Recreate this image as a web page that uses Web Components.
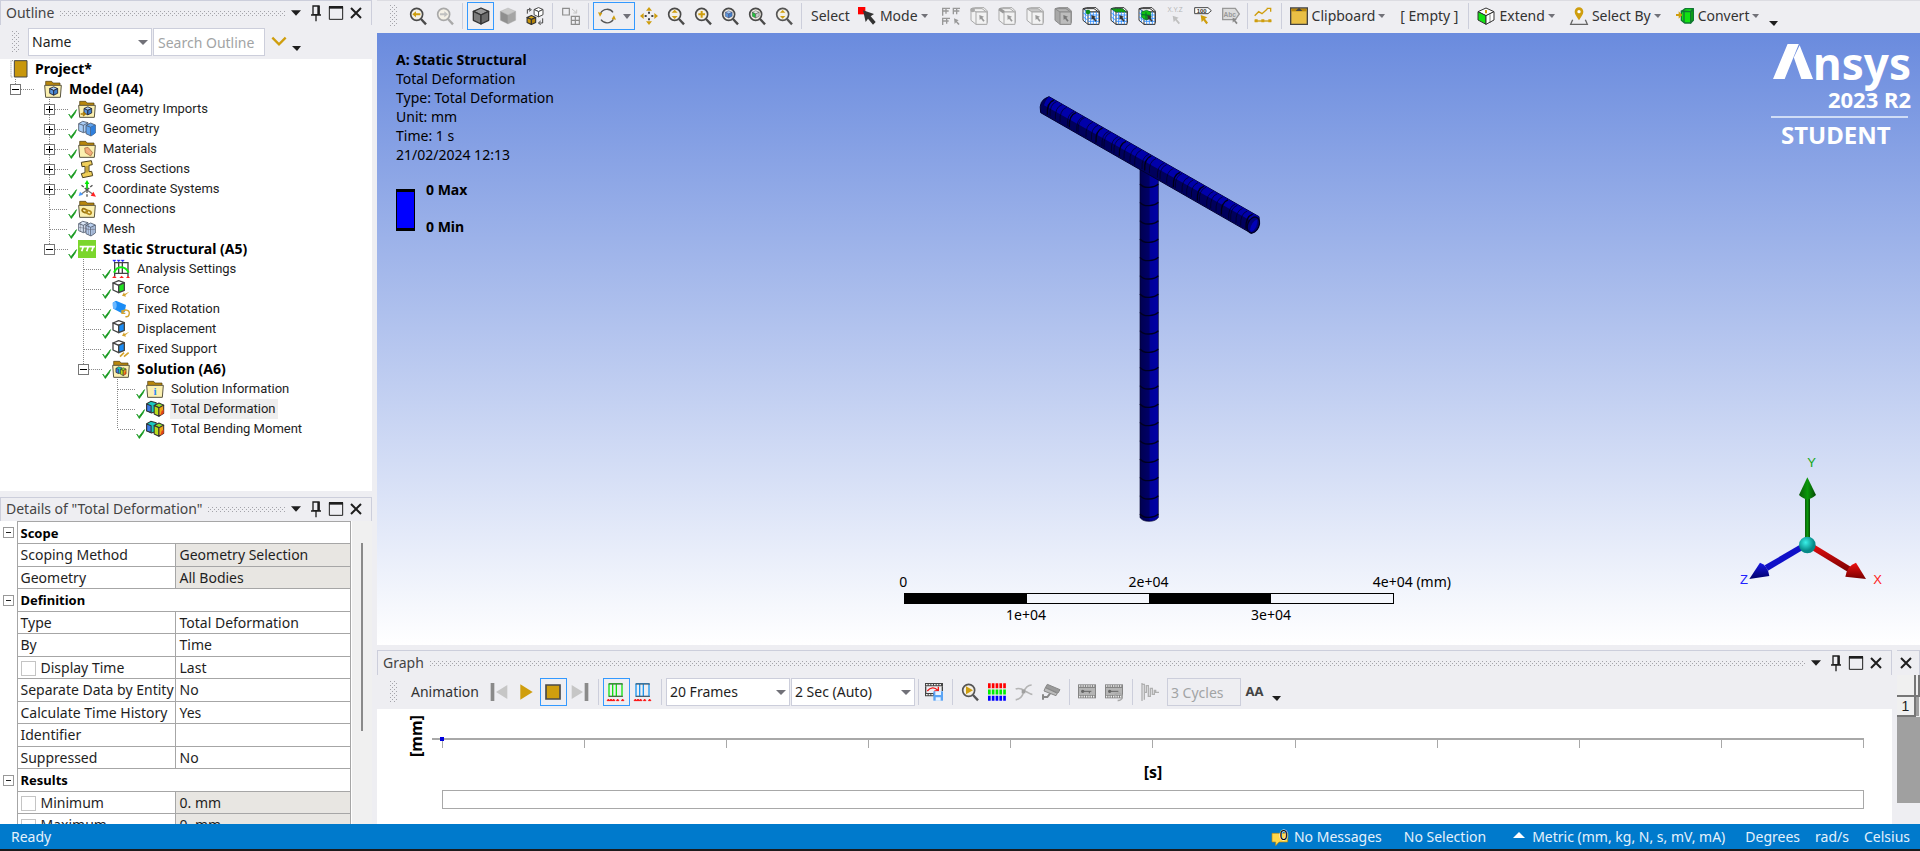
<!DOCTYPE html>
<html lang="en">
<head>
<meta charset="utf-8">
<title>Mechanical - Total Deformation</title>
<style>
html, body { height: 100%; margin: 0; }
body { background: #eeeef2; font: 14px/20px "Noto Sans", sans-serif; color: #1e1e1e; overflow: hidden; }
</style>
</head>
<body>
<mech-app></mech-app>
<script>
/* ---------- icon set: every drawing sits on a 54 x 54 board ---------- */
const G = '#cf9e0e', D = '#4a4a4a', L = '#a9a9a9';
const lens = (inner, c = D) => `<circle cx="23" cy="22" r="18" fill="#f4f0e6" stroke="${c}" stroke-width="5"/><path d="M36 36L51 52" stroke="${c}" stroke-width="7"/>${inner}`;
const folder = inner => `<path d="M5 4h18l4 5h21v14H5z" fill="#b8860b" stroke="#4a3a10" stroke-width="2"/><path d="M2 16h50l-3 36H5z" fill="#fbf0b0" stroke="#5a5540" stroke-width="3"/>${inner}`;
const cube = (a, b, c, s = D, w = 3) => `<g stroke="${s}" stroke-width="${w}" stroke-linejoin="round"><path d="M27 3L50 13 27 24 4 13z" fill="${a}"/><path d="M4 13L27 24V51L4 40z" fill="${b}"/><path d="M50 13L27 24V51L50 40z" fill="${c}"/></g>`;
const at = (x, y, s, body) => `<g transform="translate(${x} ${y}) scale(${s})">${body}</g>`;
const box = (body, front, top, side, s = L) => `<g stroke="${s}" stroke-width="3" stroke-linejoin="round"><path d="M3 5L14 2H42L52 12V46L46 52H18L3 40z" fill="${side}"/><path d="M3 5H36L50 15H18z" fill="${top}"/><path d="M18 15H51V52H18z" fill="${front}"/></g>${body}`;
const ptr = (c = '#999') => `<path d="M28 24l14 5-5 3 7 9-4 3-7-9-4 4z" fill="${c}"/>`;
const gridLines = '<path d="M26 15V52M34 15V52M43 15V52M18 24H51M18 34H51M18 43H51M10 8V45M3 17L18 28M3 29L18 40" stroke="#2b8cff" stroke-width="2.5"/>';
const blocks = (a, b, c) => `<g stroke="#4a5568" stroke-width="2.5" stroke-linejoin="round"><path d="M2 11L14 4 30 8 29 34 16 38 2 32z" fill="${a}"/><path d="M2 11L16 16 29 9M16 16V37" fill="none"/><path d="M24 16L38 9 52 15V39L39 48 24 41z" fill="${b}"/><path d="M24 16L38 22 52 15M38 22V47" fill="none"/></g>${c}`;
const film = (c, inner) => `<path d="M0 4H54V46H0z" fill="${c}"/><path d="M3 9H51M3 41H51" stroke="#eee" stroke-width="5" stroke-dasharray="4 3"/><path d="M3 15H51V36H3z" fill="#b4b4b4"/>${inner}`;
const loadCube = (c, extra) => `<g stroke="#444" stroke-width="4" stroke-linejoin="round"><path d="M3 9L20 2 37 8 20 16z" fill="#fff"/><path d="M3 9L20 16V38L3 30z" fill="#fff"/><path d="M37 8L20 16V38L37 31z" fill="${c}"/></g>${extra}`;
const arrowGold = '<path d="M30 47l6-10 2 5 14-7-12 11 2 4z" fill="#d4a32c"/>';
const support = c => `<path d="M5 2H46M5 40H46M6 3V40M17 3V40M28 3V40M45 3V40" fill="none" stroke="${c}" stroke-width="4"/><path d="M5 3H48M5 40H48" stroke="#555" stroke-width="3"/><path d="M0 53l4-5 4 4 4-4 4 4 4-4 4 5zM28 53l4-5 4 5zM43 53l4-5 4 5z" fill="#f00" stroke="#f00" stroke-width="2"/>`;
const contour = (x, y, s) => at(x, y, s, `<g stroke="#333" stroke-width="3" stroke-linejoin="round"><path d="M2 11L14 4 30 8 29 34 16 38 2 32z" fill="#19c8c0"/><path d="M2 12L15 17V37L2 32z" fill="#3d7be8"/><path d="M24 16L38 9 52 15 38 23z" fill="#8ce02a"/><path d="M24 16L38 23V48L24 41z" fill="#b8dc1c"/><path d="M52 15L38 23V48L52 39z" fill="#f0a418"/></g><path d="M46 32l6-4v11l-10 7z" fill="#e2401a"/>`);
const ICONS = {
  'zoom-prev': lens(`<path d="M10 22l11-9v6h13v6H21v6z" fill="${G}"/>`),
  'zoom-next': lens(`<path d="M36 22l-11-9v6H12v6h13v6z" fill="#c0c0c0"/>`, L),
  'shade-edges': cube('#9a9a9a', '#7c7c7c', '#6a6a6a', '#333', 4),
  'shade': cube('#c9c9c9', '#8f8f8f', '#a5a5a5', '#aaa', 1),
  'show-bodies': at(22, 0, .58, cube('#fff', '#fff', '#fff', '#444', 5)) + at(1, 24, .56, cube('#dba818', '#c8950c', '#b3830a', '#333', 6)) + `<path d="M4 20V8H12M9 3l7 5-7 5M50 34V48H40M44 42l-7 6 7 5" fill="none" stroke="#444" stroke-width="3"/>`,
  'explode': `<path d="M2 4H22V24H2zM28 28H52V52H28zM40 28V52M28 40H52" fill="none" stroke="#8c8c8c" stroke-width="3.5"/><path d="M30 6l14 12M44 8V18H34" fill="none" stroke="#c4c4c4" stroke-width="3"/>`,
  'rotate': `<path d="M8 18A22 22 0 0 1 45 16M46 37A22 22 0 0 1 9 38" fill="none" stroke="#555" stroke-width="4"/><path d="M0 16l13 2-7 11zM54 38l-13-2 7-11z" fill="${G}"/>`,
  'pan': `<path d="M27 0l9 11H18zM27 54l9-11H18zM0 27l11-9v18zM54 27l-11-9v18z" fill="${G}"/><path d="M24 14h6v6h-6zM24 34h6v6h-6zM14 24h6v6h-6zM34 24h6v6h-6z" fill="#444"/>`,
  'zoom': lens(`<path d="M23 8l9 9H14zM23 36l9-9H14z" fill="${G}"/>`),
  'zoom-box': lens(`<path d="M20 12h6v7h7v6h-7v7h-6v-7h-7v-6h7z" fill="${G}"/>`),
  'zoom-fit': lens(at(11, 10, .45, cube('#a9ccf5', '#5b96dd', '#4180cc', '#446', 3))),
  'zoom-sel': lens(at(11, 10, .45, cube('#e8e8e8', '#1fc43a', '#cfcfcf', '#444', 3))),
  'zoom-mag': lens(`<path d="M23 9l8 8H15zM23 35l8-8H15z" fill="${G}"/>`, '#555'),
  'mode': `<path d="M0 0H22V22H0z" fill="#f00"/><path d="M15 10l33 11-10 7 15 17-8 8-15-18-7 10z" fill="#333"/>`,
  'sel-all': `<g fill="none" stroke="#999" stroke-width="4"><path d="M2 2V26M2 12H20M12 2V20M2 4H24M32 4H54M34 4V22M44 4V22M34 12H52M2 32V54M2 34H24M2 42H20M14 34V50"/></g><path d="M36 34l14 6-5 3 8 8-4 3-7-8-4 5z" fill="#999"/>`,
  'sel-vertex': box('<circle cx="8" cy="9" r="7" fill="#aaa"/>' + ptr(), '#f2f2f2', '#f2f2f2', '#f2f2f2'),
  'sel-edge': box(`<path d="M4 6l14 10" stroke="#999" stroke-width="9"/>` + ptr(), '#f2f2f2', '#f2f2f2', '#f2f2f2'),
  'sel-face': box(ptr(), '#f2f2f2', '#c8c8c8', '#f2f2f2'),
  'sel-body': box(ptr('#777'), '#bdbdbd', '#b4b4b4', '#a8a8a8', '#8a8a8a'),
  'sel-node': box(gridLines + '<circle cx="18" cy="15" r="7" fill="#0a8a1c"/>' + ptr('#333'), '#fff', '#fff', '#fff', '#333'),
  'sel-eface': box(gridLines + '<path d="M4 5H37L49 15H18z" fill="#12a312" stroke="#063" stroke-width="2" stroke-dasharray="5 3"/>' + ptr('#333'), '#fff', '#fff', '#fff', '#333'),
  'sel-elem': box(gridLines + '<path d="M11 14L26 10 38 15V34L24 39 11 31z" fill="#12c312" stroke="#063" stroke-width="2"/><path d="M11 23L38 25M24 16V38" stroke="#063" stroke-width="3"/>' + ptr('#333'), '#fff', '#fff', '#fff', '#333'),
  'hit-xyz': `<text x="27" y="16" text-anchor="middle" font-family="Liberation Sans" font-size="19" fill="#b4b4b4">X.Y.Z</text><path d="M20 26l18 6-6 4 10 12-4 4-10-12-5 6z" fill="#c0c0c0"/>`,
  'label-num': `<path d="M2 2H42L52 11 42 20H2z" fill="#fff" stroke="#444" stroke-width="3"/><text x="23" y="18" text-anchor="middle" font-family="Liberation Sans" font-weight="bold" font-size="18" fill="#333">100</text><path d="M20 24l20 7-7 4 9 12-5 5-9-12-5 6z" fill="${G}"/>`,
  'label-abc': `<path d="M2 4H40L52 21 40 38H2z" fill="#dcdcdc" stroke="#999" stroke-width="4"/><text x="23" y="29" text-anchor="middle" font-family="Liberation Sans" font-weight="bold" font-size="20" fill="#999">Abc</text><path d="M32 32l12 5-4 3 7 8-4 4-7-9-4 4z" fill="#888"/>`,
  'chart': `<path d="M2 26L14 14 24 20 40 6M38 4h12v10" fill="none" stroke="${G}" stroke-width="4"/><path d="M2 42H52" stroke="${G}" stroke-width="4"/><path d="M2 37h9v9H2zM22 37h9v9h-9zM43 37h9v9h-9z" fill="${G}"/>`,
  'clipboard': `<path d="M2 3H52V52H2z" fill="#e9bf45" stroke="#444" stroke-width="4"/><path d="M4 5H50V13H4z" fill="#b8860b"/><path d="M17 12l10-10 10 10z" fill="#444"/>`,
  'extend': `<g stroke="#333" stroke-width="3" stroke-linejoin="round"><path d="M27 3L51 14 27 26 3 14z" fill="#fff"/><path d="M3 14L27 26V52L3 39z" fill="#12e212"/><path d="M51 14L27 26V52L51 39z" fill="#fff"/></g><path d="M24 9h6v10h-6z" fill="${G}"/><path d="M39 22v26" stroke="#444" stroke-width="2"/>`,
  'select-by': `<path d="M27 40C20 28 14 22 14 14a13 13 0 0 1 26 0c0 8-6 14-13 26z" fill="${G}"/><circle cx="27" cy="14" r="5" fill="#fff"/><path d="M8 38L2 52H52L46 38" fill="none" stroke="#666" stroke-width="4"/>`,
  'convert': `<g stroke="#173" stroke-width="4" stroke-linejoin="round"><path d="M18 12L28 5H52L44 14z" fill="#12e212"/><path d="M20 14H44V48H26L16 40V12z" fill="#12e212"/><path d="M52 6V40L44 48V14z" fill="#0cae0c"/><path d="M24 14V46" fill="none"/></g><path d="M0 21H8V13l11 11L8 35V27H0z" fill="${G}"/>`,
  'chevron': '<path d="M7 14L27 34 47 14" fill="none" stroke="#cf9e0e" stroke-width="7"/>',
  'first': '<path d="M2 0H13V54H2z" fill="#8a8a8a"/><path d="M52 6V48L18 27z" fill="#c6c6c6"/>',
  'play': `<path d="M10 4L47 27 10 50z" fill="${G}"/>`,
  'stop': `<path d="M6 6H48V48H6z" fill="${G}" stroke="#4a4a4a" stroke-width="5"/>`,
  'last': '<path d="M41 0H52V54H41z" fill="#8a8a8a"/><path d="M2 6V48L36 27z" fill="#c6c6c6"/>',
  'disp-green': support('#12e212'),
  'disp-blue': support('#1a95f0'),
  'export': `<path d="M0 0H54V10H0zM0 30H30V40H0z" fill="#444"/><path d="M3 5H51M3 35H30" stroke="#eee" stroke-width="4" stroke-dasharray="5 3"/><path d="M2 10V32M52 10V24" stroke="#444" stroke-width="4"/><path d="M7 24C16 12 30 12 38 22M40 11V24H28" fill="none" stroke="#f01818" stroke-width="4"/><path d="M25 25H54V53H25z" fill="#5aa4f5"/><path d="M31 25H48V36H31zM32 43H47V53H32z" fill="#e9f3ff"/>`,
  'zoom-play': lens(`<path d="M15 10L36 22 15 34z" fill="${G}"/>`, '#555'),
  'rgb': `<g stroke-width="15" stroke-dasharray="8 3.4"><path d="M0 8H54" stroke="#f00"/><path d="M0 27H54" stroke="#0e0"/><path d="M0 46H54" stroke="#00f"/></g>`,
  'curve': '<path d="M2 18C18 12 26 22 34 26S46 34 52 34M2 50C16 50 22 40 26 28S38 6 50 6" fill="none" stroke="#b4b4b4" stroke-width="5"/><path d="M20 20h11v11H20z" fill="#a0a0a0"/>',
  'camera': '<path d="M16 4L54 20 48 30 10 14z" fill="#9a9a9a" stroke="#888" stroke-width="3"/><path d="M10 14L46 31 42 38 6 24z" fill="#bbb" stroke="#888" stroke-width="3"/><path d="M24 32L16 42H4M3 34V50" fill="none" stroke="#888" stroke-width="6"/>',
  'film-a': film('#858585', '<path d="M12 25H40M34 25V31" stroke="#666" stroke-width="3"/><circle cx="14" cy="25" r="5" fill="#666"/>'),
  'film-b': film('#858585', '<path d="M12 25H40" stroke="#666" stroke-width="3"/><circle cx="14" cy="25" r="5" fill="#666"/><path d="M30 38A11 11 0 1 1 38 52" fill="none" stroke="#aaa" stroke-width="5"/>'),
  'wave': '<path d="M3 0V54M3 4H10V50M10 28H16V8H22V40H28V16H34V34H40V22H44V28H54" fill="none" stroke="#b0b0b0" stroke-width="4"/>',
  'pin': '<path d="M18 6H36V32H18zM12 33H42M27 32V52" fill="none" stroke="#1e1e1e" stroke-width="4"/><path d="M31 6H38V32H31z" fill="#1e1e1e"/>',
  'max': '<path d="M7 8H47V46H7z" fill="none" stroke="#1e1e1e" stroke-width="3"/><path d="M6 6H48V14H6z" fill="#1e1e1e"/>',
  'close': '<path d="M12 12L42 42M42 12L12 42" stroke="#1e1e1e" stroke-width="6"/>',
  'down': '<path d="M12 19H42L27 35z" fill="#1e1e1e"/>',
  'project': '<path d="M13 2H51V51H13z" fill="#c8970c" stroke="#444" stroke-width="3"/><path d="M9 2H3V51H9" fill="#fff" stroke="#888" stroke-width="3" stroke-dasharray="3 3"/>',
  'model': folder(at(15, 19, .52, cube('#a9ccf5', '#5b96dd', '#4180cc', '#223', 5))),
  'imports': folder(at(16, 19, .5, cube('#a9ccf5', '#5b96dd', '#4180cc', '#223', 5)) + '<path d="M8 42H20M15 36l7 6-7 6" fill="none" stroke="#a87a08" stroke-width="4"/>'),
  'geometry': blocks('#a9cdf7', '#5fa2ec', '<path d="M38 22L52 15V39L39 48z" fill="#2f7fdc"/>'),
  'materials': folder('<path d="M20 24L30 22 44 38 38 48 22 38z" fill="#f0a878" stroke="#a06a3c" stroke-width="2"/><path d="M26 28l12 12" stroke="#fff3" stroke-width="3"/>'),
  'sections': '<path d="M10 7L40 2 43 14 33 16V35L41 34 44 47 14 53 10 41 21 38V19L12 20z" fill="#f0cf5a" stroke="#4a4020" stroke-width="3"/><path d="M27 18V38" stroke="#9a7a18" stroke-width="3"/>',
  'coords': '<path d="M27 30V10" stroke="#0c0" stroke-width="5"/><path d="M27 0l7 12H20z" fill="#0e0"/><path d="M27 30L10 42M27 30L44 42" stroke="#777" stroke-width="4"/><path d="M2 48l4-13 9 9z" fill="#4a9cff"/><path d="M54 50l-16-3 8-12z" fill="#f22"/><path d="M27 30L9 14M27 30L45 14M27 30V50" stroke="#555" stroke-width="4" stroke-dasharray="9 4"/>',
  'connections': folder('<ellipse cx="20" cy="32" rx="8" ry="5" fill="none" stroke="#9a7410" stroke-width="5" transform="rotate(25 20 32)"/><ellipse cx="32" cy="37" rx="8" ry="5" fill="none" stroke="#b38a1c" stroke-width="5" transform="rotate(25 32 37)"/>'),
  'mesh': blocks('#dbe6f7', '#b9d0f0', '<path d="M8 6V35M22 12V36M31 12V44M45 18V43M3 22L29 26M24 29L52 28" stroke="#667" stroke-width="1.5"/>'),
  'structural': '<path d="M0 0H54V54H0z" fill="#7bd62c"/><path d="M5 20H51M16 20L11 34M31 20L26 34M46 20L41 34" stroke="#fff" stroke-width="5"/>',
  'analysis': '<path d="M6 8H50M6 40H50M8 6V50M20 6V42M31 6V42M48 6V50" stroke="#444" stroke-width="4"/><path d="M6 38C14 16 40 16 50 38" fill="none" stroke="#1e1" stroke-width="6"/><path d="M2 0h10l-5 6zM15 0h10l-5 6zM27 0h10l-5 6z" fill="#22f" stroke="#22f"/><path d="M0 54l7-7 7 7zM22 54l7-7 7 7zM42 54l6-7 6 7z" fill="#f22"/>',
  'force': loadCube('#1fe21f', arrowGold),
  'rotation': '<path d="M2 8L12 2 42 15 38 36 30 40 4 26z" fill="#1a8cf5"/><ellipse cx="8" cy="16" rx="6" ry="11" fill="#6ab8ff"/><path d="M32 38A10 10 0 1 1 40 50M30 30V40H40" fill="none" stroke="#d4a32c" stroke-width="4"/>',
  'displacement': loadCube('#1a8cf5', arrowGold),
  'support': loadCube('#1a8cf5', '<path d="M24 50L36 38M36 50L50 38" fill="none" stroke="#d4a32c" stroke-width="5"/>'),
  'solution': folder(contour(11, 18, .6)),
  'info': folder('<text x="27" y="46" text-anchor="middle" font-family="Liberation Serif" font-weight="bold" font-size="34" fill="#2b8cf0">i</text>'),
  'result': contour(0, 0, 1.02),
  'check': '<path d="M4 30L16 44 46 6 38 26 18 54z" fill="#109618" stroke="#109618" stroke-width="4" stroke-linejoin="round"/>',
  'message': '<path d="M3 16H50V42H24L14 53V42H3z" fill="#ffd84a" stroke="#b88a10" stroke-width="2"/><text x="38" y="35" text-anchor="middle" font-family="Noto Sans" font-size="44" stroke="#fff" stroke-width="3" paint-order="stroke" fill="#000">0</text>'
};
const define = (name, html, setup) => {
  const t = document.createElement('template');
  t.innerHTML = html;
  customElements.define(name, class extends HTMLElement {
    constructor() { super(); this.attachShadow({ mode: 'open' }).append(t.content.cloneNode(true)); }
    connectedCallback() { if (setup) setup(this, this.shadowRoot); }
  });
};
const $ = (r, s) => r.querySelector(s);

define('ui-icon', `<style>:host{display:block;flex:none;width:18px;height:18px}svg{display:block;width:100%;height:100%;overflow:visible}</style><svg viewBox="0 0 54 54" aria-hidden="true"></svg>`,
  (el, r) => { $(r, 'svg').innerHTML = ICONS[el.getAttribute('name')] || ''; });

define('drag-dots', `<style>:host{display:block;--dot:conic-gradient(from 270deg at 1px 1px,#a4a4aa 90deg,transparent 0);background:var(--dot) 0 0/4px 4px,var(--dot) 2px 2px/4px 4px;}</style>`);

define('tool-sep', `<style>:host{display:block;flex:none;width:1px;height:26px;margin:0 4px;background:#cccedb}:host([tight]){margin:0 2px}</style>`);

define('tool-button', `<style>
:host{display:block;flex:none}
button{box-sizing:border-box;display:flex;align-items:center;justify-content:center;width:27px;height:28px;margin:0;padding:0;border:0;background:none}
:host([boxed]) button{border:1px solid #3399ff}
:host([drop]) button{width:42px;gap:7px}
svg{width:8px;height:5px;display:none}
:host([drop]) svg{display:block}
</style><button type="button"><ui-icon></ui-icon><svg viewBox="0 0 8 5"><path d="M0 0H8L4 5z" fill="#717178"/></svg></button>`,
  (el, r) => { const n = el.getAttribute('icon'); $(r, 'ui-icon').setAttribute('name', n); const i = $(r, 'ui-icon'); if (i.connectedCallback) i.connectedCallback(); $(r, 'button').setAttribute('aria-label', n); });

define('text-button', `<style>
:host{display:block;flex:none}
button{display:flex;align-items:center;height:28px;margin:0;padding:0 6px 0 4px;border:0;background:none;font:inherit;color:#333;white-space:nowrap}
slot[name=icon]::slotted(*){margin-right:4px}
svg{width:7px;height:5px;margin-left:3px;display:none}
:host([drop]) svg{display:block}
</style><button type="button"><slot name="icon"></slot><slot></slot><svg viewBox="0 0 7 5"><path d="M0 0H7L4 4z" fill="#717178"/></svg></button>`);

define('more-arrow', `<style>:host{display:block;flex:none;align-self:flex-end;padding:0 4px 8px}svg{display:block;width:9px;height:5px}</style><svg viewBox="0 0 9 5"><path d="M0 0H9L5 5z" fill="#1e1e1e"/></svg>`);

define('drop-down', `<style>
:host{display:grid;flex:none;width:124px;height:28px}
select,svg{grid-area:1/1}
select{appearance:none;box-sizing:border-box;width:100%;height:100%;margin:0;padding:0 20px 0 3px;border:1px solid #cccedb;border-radius:0;background:#fff;font:inherit;color:#1e1e1e}
svg{width:10px;height:5px;align-self:center;justify-self:end;margin-right:4px;pointer-events:none}
</style><select></select><svg viewBox="0 0 10 5"><path d="M0 0H10L5 5z" fill="#717178"/></svg>`,
  (el, r) => { $(r, 'select').setAttribute('aria-label', el.getAttribute('label')); $(r, 'select').innerHTML = `<option>${el.getAttribute('value')}</option>`; });

define('panel-title', `<style>
:host{box-sizing:border-box;display:flex;align-items:center;flex:none;height:25px;padding:0 5px;border:1px solid #cccedb;border-bottom:0;background:#eeeef2;color:#444}
h2{margin:0 6px 0 0;font:inherit;white-space:nowrap}
drag-dots{flex:1;height:5px;min-width:0}
button{flex:none;width:20px;height:20px;margin:0;padding:1px;border:0;background:none}
:host([only-close]) :is(h2,drag-dots,.more){display:none}
:host([only-close]){padding:0;border-left:0}
:host([only-close]) button{width:18px;padding:1px 0}
</style><h2><slot></slot></h2><drag-dots></drag-dots><button class="more" type="button" aria-label="Menu"><ui-icon name="down"></ui-icon></button><button class="more" type="button" aria-label="Pin"><ui-icon name="pin"></ui-icon></button><button class="more" type="button" aria-label="Maximize"><ui-icon name="max"></ui-icon></button><button type="button" aria-label="Close"><ui-icon name="close"></ui-icon></button>`);

define('tree-node', `<style>
:host{display:block;--dots:repeating-linear-gradient(#888 0 1px,transparent 1px 2px);background:var(--dots) 15px 0/1px 100% no-repeat}
:host([last]){background-size:1px 10px}
:host([root]){background:none}
.row{display:flex;align-items:center;height:20px;padding-left:10px}
.box{flex:none;box-sizing:border-box;width:11px;height:11px;display:grid;place-items:center;border:1px solid #777;background:#fff}
.box svg{width:7px;height:7px}
.wire{flex:none;height:1px;width:13px;background:repeating-linear-gradient(90deg,#888 0 1px,transparent 1px 2px)}
.tick{width:10px;height:11px;margin-top:9px}
.gap{flex:none;width:10px}
.icon{margin-right:6px}
.text{padding:0 2px 0 1px;font:13px/20px Roboto,"Noto Sans",sans-serif;white-space:nowrap}
:host([bold]) .text{font:bold 14px/20px "Noto Sans",sans-serif;color:#000}
:host([selected]) .text{background:#eeeeee}
:host([leaf]) .box{display:none}
:host([leaf]) .wire{width:18px;margin-left:6px}
:host([root]) :is(.box,.wire,.tick,.gap){display:none}
:host([nocheck]) .tick{display:none}
:host(:not([nocheck])) .gap{display:none}
.kids{margin-left:34px}
:host([root]) .kids{margin-left:0}
</style><div class="row"><span class="box"><svg viewBox="0 0 7 7"><path d="M0 3H7V4H0z"/><path class="v" d="M3 0H4V7H3z"/></svg></span><span class="wire"></span><ui-icon class="tick" name="check"></ui-icon><span class="gap"></span><ui-icon class="icon"></ui-icon><span class="text"></span></div><div class="kids"><slot></slot></div>`,
  (el, r) => {
    const i = $(r, '.icon'); i.setAttribute('name', el.getAttribute('icon')); if (i.connectedCallback) i.connectedCallback();
    $(r, '.text').textContent = el.getAttribute('label');
    if (el.children.length) $(r, '.v').remove();
  });

define('outline-panel', `<style>
:host{display:flex;flex-direction:column;min-height:0;background:#fff;overflow:hidden}
.bar{display:flex;align-items:center;flex:none;height:34px;padding-left:12px;background:#eeeef2}
.bar drag-dots{width:7px;height:22px;margin-right:9px}
input{box-sizing:border-box;width:112px;height:28px;margin:0 5px 0 1px;padding:0 4px;border:1px solid #cccedb;background:#fff;font:inherit}
input::placeholder{color:#a2a4a5;opacity:1}
</style>
<panel-title>Outline</panel-title>
<div class="bar"><drag-dots></drag-dots><drop-down label="Filter" value="Name"></drop-down><input type="text" aria-label="Search Outline" placeholder="Search Outline"><ui-icon name="chevron"></ui-icon><more-arrow></more-arrow></div>
<tree-node root bold icon="project" label="Project*">
 <tree-node last nocheck bold icon="model" label="Model (A4)">
  <tree-node icon="imports" label="Geometry Imports"></tree-node>
  <tree-node icon="geometry" label="Geometry"></tree-node>
  <tree-node icon="materials" label="Materials"></tree-node>
  <tree-node icon="sections" label="Cross Sections"></tree-node>
  <tree-node icon="coords" label="Coordinate Systems"></tree-node>
  <tree-node leaf icon="connections" label="Connections"></tree-node>
  <tree-node leaf icon="mesh" label="Mesh"></tree-node>
  <tree-node last bold icon="structural" label="Static Structural (A5)">
   <tree-node leaf icon="analysis" label="Analysis Settings"></tree-node>
   <tree-node leaf icon="force" label="Force"></tree-node>
   <tree-node leaf icon="rotation" label="Fixed Rotation"></tree-node>
   <tree-node leaf icon="displacement" label="Displacement"></tree-node>
   <tree-node leaf icon="support" label="Fixed Support"></tree-node>
   <tree-node last bold icon="solution" label="Solution (A6)">
    <tree-node leaf icon="info" label="Solution Information"></tree-node>
    <tree-node leaf selected icon="result" label="Total Deformation"></tree-node>
    <tree-node leaf last icon="result" label="Total Bending Moment"></tree-node>
   </tree-node>
  </tree-node>
 </tree-node>
</tree-node>`);

const group = t => `<tr><td class="g"><span class="box"></span></td><th colspan="2" scope="colgroup">${t}</th></tr>`;
const row = (k, v, ro, id) => `<tr><td class="g"></td><td class="k">${id ? `<input type="checkbox" id="${id}"><label for="${id}">${k}</label>` : k}</td><td class="v${ro ? ' ro' : ''}">${v}</td></tr>`;
define('details-panel', `<style>
:host{display:flex;flex-direction:column;min-height:0;background:#fff;overflow:hidden}
panel-title{height:24px}
.body{display:grid;grid-template-columns:1fr 20px;flex:1;min-height:0;overflow:hidden}
.scroll{background:#f0f0f0;display:grid;justify-content:center;align-content:start}
.thumb{width:2px;height:188px;margin-top:22px;background:#8a8a8a}
table{width:351px;height:316px;border-collapse:collapse;table-layout:fixed}
td,th{padding:0 0 0 4px;border:1px solid #a6a6a6;text-align:left;line-height:20px;font-weight:400;white-space:nowrap;overflow:hidden}
th,.k{padding-left:3px}
th{font-weight:700;font-size:13px;color:#000}
.g{padding:0 0 0 3px;border:0}
.box{display:grid;place-items:center;width:9px;height:9px;border:1px solid #999}
.box::before{content:"";width:5px;height:1px;background:#222}
.ro{background:#e8e6e2}
input{appearance:none;box-sizing:border-box;width:15px;height:15px;margin:0 5px 0 0;border:1px solid #c4c4c4;background:#fff;vertical-align:middle}
</style><panel-title>Details of "Total Deformation"</panel-title>
<div class="body"><table><colgroup><col style="width:17px"><col style="width:158px"><col></colgroup><tbody>
${group('Scope')}${row('Scoping Method', 'Geometry Selection', 1)}${row('Geometry', 'All Bodies', 1)}${group('Definition')}${row('Type', 'Total Deformation')}${row('By', 'Time')}${row('Display Time', 'Last', 0, 'dt')}${row('Separate Data by Entity', 'No')}${row('Calculate Time History', 'Yes')}${row('Identifier', '')}${row('Suppressed', 'No')}${group('Results')}${row('Minimum', '0. mm', 1, 'mn')}${row('Maximum', '0. mm', 1, 'mx')}
</tbody></table><div class="scroll"><div class="thumb"></div></div></div>`);

const btns = (...n) => n.map(i => `<tool-button icon="${i}"></tool-button>`).join('');
const tbtn = (i, t) => `<text-button drop><ui-icon slot="icon" name="${i}"></ui-icon>${t}</text-button>`;
define('view-toolbar', `<style>
:host{box-sizing:border-box;display:flex;align-items:center;height:33px;padding:0 0 2px 13px;border-top:1px solid #dcdce2;background:#eeeef2;overflow:hidden}
drag-dots{flex:none;width:7px;height:22px;margin-right:7px}
.label{padding:0 4px 0 5px;color:#333}
.set{display:flex;gap:1px;padding-left:4px}
.menus{display:flex;align-items:center;gap:5px}
.menus tool-sep{margin:0 -1px}
more-arrow{padding-bottom:5px}
</style><drag-dots></drag-dots>${btns('zoom-prev', 'zoom-next')}<tool-sep></tool-sep><tool-button boxed icon="shade-edges"></tool-button>${btns('shade', 'show-bodies')}<tool-sep></tool-sep>${btns('explode')}<tool-sep></tool-sep><tool-button boxed drop icon="rotate"></tool-button>${btns('pan', 'zoom', 'zoom-box', 'zoom-fit', 'zoom-sel', 'zoom-mag')}<tool-sep></tool-sep><span class="label">Select</span>${tbtn('mode', 'Mode')}<span class="set">${btns('sel-all', 'sel-vertex', 'sel-edge', 'sel-face', 'sel-body', 'sel-node', 'sel-eface', 'sel-elem', 'hit-xyz', 'label-num', 'label-abc')}</span><tool-sep tight></tool-sep>${btns('chart')}<tool-sep></tool-sep><span class="menus">${tbtn('clipboard', 'Clipboard')}<text-button>[ Empty ]</text-button><tool-sep></tool-sep>${tbtn('extend', 'Extend')}${tbtn('select-by', 'Select By')}${tbtn('convert', 'Convert')}</span><more-arrow></more-arrow>`);

/* ring marks of the finite element mesh along the beam and the column */
let beamRings = '', columnRings = '';
[0, 8, 24, 38, 60, 66, 88, 92, 116, 132, 146, 164, 170, 192, 200, 216, 230, 248, 262, 284, 292, 306, 330, 338, 358, 378, 384, 404, 418, 432, 450, 456, 478, 490, 506, 522, 544, 550, 566, 580, 596].forEach((d, i) => {
  const x = 92 + d, y = 54 + d * .574;
  beamRings += `<path d="M${x + 8} ${y + 6}Q${x - 14} ${y + 14} ${x - 12} ${y + 50}" stroke-width="${i % 5 ? 2 : 4}"/>`;
});
for (let y = 318; y < 1310; y += 55) columnRings += `<path d="M358 ${y - 6}Q366 ${y + 5} 385 ${y + 4}T413 ${y - 6}"/>`;
define('beam-model', `<style>:host{display:block}svg{display:block;width:232px;height:435px}</style><svg viewBox="37 30 696 1305" role="img" aria-label="T shaped beam model">
<defs><linearGradient id="c"><stop stop-color="#000050"/><stop offset=".5" stop-color="#000068"/><stop offset=".55" stop-color="#000098"/><stop offset="1" stop-color="#0000a8"/></linearGradient></defs>
<path d="M358 250H413V1312Q406 1324 385 1324T358 1312z" fill="url(#c)" stroke="#000030" stroke-width="2"/><g fill="none" stroke="#000020" stroke-width="4">${columnRings}</g>
<path d="M85 50L715 410Q722 450 692 460L60 98Q52 60 85 50z" fill="#00005c" stroke="#000030" stroke-width="3"/><path d="M85 50L715 410 704 430 70 76Q76 56 85 50z" fill="#0000aa"/>
<g fill="none" stroke="#000018">${beamRings}</g>
<ellipse cx="698" cy="435" rx="17" ry="25" transform="rotate(24 698 435)" fill="#000078" stroke="#000020" stroke-width="4"/><path d="M688 450Q692 425 710 418 712 444 692 456z" fill="#0000b8"/></svg>`);

define('axis-triad', `<style>:host{display:block}svg{display:block;width:150px;height:135px}text{font:39px "Liberation Sans",sans-serif}</style><svg viewBox="48 36 450 405" role="img" aria-label="Axis triad">
<defs><linearGradient id="g"><stop stop-color="#0a5c0a"/><stop offset=".5" stop-color="#0a980a"/><stop offset="1" stop-color="#064806"/></linearGradient><linearGradient id="r" x2="0" y2="1"><stop stop-color="#f01010"/><stop offset="1" stop-color="#700"/></linearGradient><linearGradient id="b" x2="0" y2="1"><stop stop-color="#1818e8"/><stop offset="1" stop-color="#000068"/></linearGradient><radialGradient id="s" cx=".4" cy=".35"><stop stop-color="#3af0e8"/><stop offset="1" stop-color="#068a88"/></radialGradient></defs>
<path d="M255 170H270V300H255z" fill="url(#g)"/><path d="M262 112L288 165Q262 190 237 165z" fill="url(#g)"/>
<path d="M262 322L384 396 392 380 270 306z" fill="url(#r)"/><path d="M438 417L376 410Q382 376 408 368z" fill="url(#r)"/>
<path d="M262 322L144 392 134 376 254 306z" fill="#1010c8"/><path d="M88 417L148 408Q144 376 120 368z" fill="url(#b)"/>
<circle cx="262" cy="315" r="25" fill="url(#s)"/>
<text x="262" y="80" fill="#18a818">Y</text><text x="460" y="432" fill="#f22">X</text><text x="60" y="432" fill="#22f">Z</text></svg>`);

define('scale-ruler', `<style>
:host{display:block;color:#000}
.lab{display:grid;line-height:22px;text-align:center;white-space:nowrap}
.bar{box-sizing:border-box;height:11px;border:1px solid #000;background:linear-gradient(90deg,#000 25%,#fff0 25% 50%,#000 50% 75%,#fff0 75%)}
.top{grid-template-columns:repeat(3,1fr);margin:0 -123px}
.bot{grid-template-columns:repeat(2,1fr)}
.wide{justify-self:center;width:42px;text-align:left}
</style><div class="lab top"><span>0</span><span>2e+04</span><span class="wide">4e+04 (mm)</span></div><div class="bar"></div><div class="lab bot"><span>1e+04</span><span>3e+04</span></div>`);

define('brand-mark', `<style>
:host{display:flex;flex-direction:column;align-items:flex-end;color:#fff;font-weight:700}
.name{display:flex;align-items:flex-end;height:46px;font-size:44px}
.name svg{width:40px;height:35px;margin:0 0 8px}
.name span{height:46px;line-height:44px}
.rel{font-size:22px;line-height:24px}
.edu{box-sizing:border-box;width:137px;margin:5px 3px 0 0;padding-left:10px;border-top:2px solid #cfdcf6;font-size:24px;line-height:34px}
</style><div class="name"><svg viewBox="0 0 96 104" preserveAspectRatio="none" aria-label="A"><path d="M0 104L35 0H62L28 104zM50 40L64 4 96 104H68z" fill="#fff"/></svg><span>nsys</span></div><div class="rel">2023 R2</div><div class="edu">STUDENT</div>`);

define('result-view', `<style>
:host{display:grid;grid-template:minmax(0,1fr) auto/1fr 490px 1fr;min-height:0;overflow:hidden;background:linear-gradient(#6a8bde,#fff);color:#000}
.info{grid-area:1/1;padding:17px 0 0 19px;line-height:19px}
p{margin:0;white-space:nowrap}
.legend{display:flex;gap:11px;margin-top:16px;font-weight:700}
.sw{box-sizing:border-box;width:19px;height:42px;margin-top:9px;background:#00f;border:1px solid #000;border-width:3px 1px}
.vals{display:flex;flex-direction:column;justify-content:space-between;height:56px}
beam-model{grid-area:1/2;justify-self:center;margin-top:57px}
brand-mark{grid-area:1/3;justify-self:end;align-self:start;margin:8px 9px 0 0}
axis-triad{grid-area:1/3/3/4;align-self:end;justify-self:end;margin:0 34px 58px 0}
scale-ruler{grid-area:2/2;margin-bottom:19px}
</style><div class="info"><p><b>A: Static Structural</b></p><p>Total Deformation</p><p>Type: Total Deformation</p><p>Unit: mm</p><p>Time: 1 s</p><p>21/02/2024 12:13</p><div class="legend"><div class="sw"></div><div class="vals"><span>0 Max</span><span>0 Min</span></div></div></div>
<beam-model></beam-model><brand-mark></brand-mark><axis-triad></axis-triad><scale-ruler></scale-ruler>`);

define('time-chart', `<style>
:host{display:grid;grid-template-columns:31px 34px 1fr 28px;align-content:start;flex:1;background:#fff;color:#000;font-weight:700;font-size:16px}
.y{grid-area:1/1/2/2;justify-self:end;width:16px;height:42px;line-height:16px;margin:6px -16px 0 0;writing-mode:vertical-rl;transform:rotate(180deg)}
.plot{grid-area:1/3;margin-top:29px}
.axis{display:flex;justify-content:space-between;margin-left:-10px;padding-left:10px;border-top:2px solid #a8a8a8}
.axis i{width:1px;height:8px;background:#a8a8a8}
.axis i:first-child::before{content:"";display:block;width:4px;height:4px;margin:-3px 0 0 -2px;background:#00d}
.x{line-height:30px;margin-top:9px;text-align:center}
.range{box-sizing:border-box;height:19px;margin-top:3px;border:1px solid #a8a8a8}
</style><div class="y">[mm]</div><div class="plot"><div class="axis">${'<i></i>'.repeat(11)}</div><div class="x">[s]</div><div class="range"></div></div>`);

define('graph-panel', `<style>
:host{display:flex;flex-direction:column;min-width:0;background:#eeeef2}
.bar{display:flex;align-items:center;flex:none;height:34px;padding:0 0 0 13px;overflow:hidden}
.bar drag-dots{flex:none;width:7px;height:22px;margin-right:14px}
.bar>span{margin-right:7px;color:#333}
drop-down{margin-right:1px}
input{box-sizing:border-box;width:74px;height:28px;margin:0 4px 0 3px;padding:0 3px;border:1px solid #cccedb;background:#eeeef2;font:inherit;color:#a2a4a5}
button{width:19px;margin:0 4px 2px 0;padding:0;border:0;background:none;font:bold 13px "Noto Sans",sans-serif;color:#444}
</style><panel-title>Graph</panel-title><div class="bar"><drag-dots></drag-dots><span>Animation</span>${btns('first', 'play')}<tool-button boxed icon="stop"></tool-button>${btns('last')}<tool-sep></tool-sep><tool-button boxed icon="disp-green"></tool-button>${btns('disp-blue')}<tool-sep></tool-sep><drop-down label="Frames" value="20 Frames"></drop-down><drop-down label="Duration" value="2 Sec (Auto)"></drop-down><tool-sep tight></tool-sep>${btns('export')}<tool-sep></tool-sep>${btns('zoom-play', 'rgb', 'curve', 'camera')}<tool-sep></tool-sep>${btns('film-a', 'film-b')}<tool-sep></tool-sep>${btns('wave')}<input type="text" aria-label="Cycles" value="3 Cycles" disabled><button type="button">AA</button><more-arrow></more-arrow></div><time-chart></time-chart>`);

define('tabular-panel', `<style>
:host{display:flex;flex-direction:column;background:#eeeef2;overflow:hidden}
.data{box-sizing:border-box;height:128px;background:#a0a0a0}
table{border-collapse:collapse;background:#f0f0f0;width:23px;table-layout:fixed;font:14px/18px "Liberation Sans",sans-serif}
td,th{height:18px;padding:0;border-right:2px solid #777;border-bottom:2px solid #777;font-weight:400}
th:first-child{width:17px}
tr:first-child th{height:20px}
tr+tr td{border:0;background:#a0a0a0}
</style><panel-title only-close></panel-title><div class="data"><table><tr><th></th><th></th></tr><tr><th scope="row">1</th><td></td></tr></table></div>`);

define('status-bar', `<style>
:host{box-sizing:border-box;display:flex;align-items:center;height:27px;padding:0 10px 0 11px;border-bottom:2px solid #1b1b1c;background:#007acc;color:#e4f1fb;white-space:nowrap}
.ready{flex:1}
ui-icon{margin-right:5px}
span+span{margin-left:15px}
span.sel{margin-left:22px}
span.deg{margin-left:20px}
svg{width:12px;height:6px;margin:0 7px 3px 27px}
</style><span class="ready">Ready</span><ui-icon name="message"></ui-icon><span>No Messages</span><span class="sel">No Selection</span><svg viewBox="0 0 12 6"><path d="M6 0L12 6H0z" fill="#fff"/></svg><span>Metric (mm, kg, N, s, mV, mA)</span><span class="deg">Degrees</span><span>rad/s</span><span>Celsius</span>`);

define('mech-app', `<style>
:host{display:grid;grid-template:minmax(0,1fr) 27px/372px minmax(0,1fr);column-gap:5px;height:100vh}
.side{display:grid;grid-template-rows:3fr 2fr;gap:6px;min-height:0}
.main{display:grid;grid-template-rows:33px minmax(0,1fr) 174px;min-height:0}
result-view{margin-bottom:5px}
.dock{display:grid;grid-template-columns:minmax(0,1fr) 23px;gap:5px}
status-bar{grid-column:1/-1}
</style><div class="side"><outline-panel></outline-panel><details-panel></details-panel></div><div class="main"><view-toolbar></view-toolbar><result-view></result-view><div class="dock"><graph-panel></graph-panel><tabular-panel></tabular-panel></div></div><status-bar></status-bar>`);
</script>
</body>
</html>
